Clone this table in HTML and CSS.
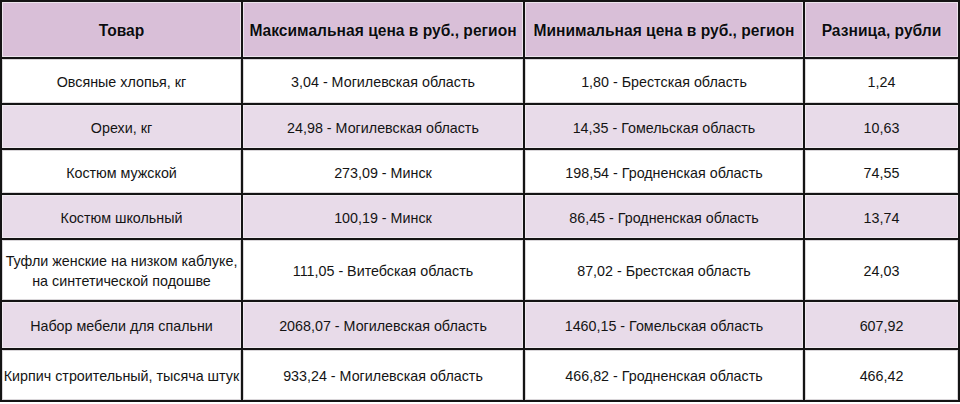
FILE: index.html
```html
<!DOCTYPE html>
<html lang="ru">
<head>
<meta charset="utf-8">
<title>Цены</title>
<link rel="stylesheet" href="styles.css">
</head>
<body>
<table class="prices">
  <colgroup>
    <col class="c1"><col class="c2"><col class="c3"><col class="c4">
  </colgroup>
  <tr class="head">
    <th>Товар</th>
    <th>Максимальная цена в руб., регион</th>
    <th>Минимальная цена в руб., регион</th>
    <th>Разница, рубли</th>
  </tr>
  <tr class="r1">
    <td>Овсяные хлопья, кг</td>
    <td>3,04 - Могилевская область</td>
    <td>1,80 - Брестская область</td>
    <td>1,24</td>
  </tr>
  <tr class="r alt">
    <td>Орехи, кг</td>
    <td>24,98 - Могилевская область</td>
    <td>14,35 - Гомельская область</td>
    <td>10,63</td>
  </tr>
  <tr class="r">
    <td>Костюм мужской</td>
    <td>273,09 - Минск</td>
    <td>198,54 - Гродненская область</td>
    <td>74,55</td>
  </tr>
  <tr class="r alt">
    <td>Костюм школьный</td>
    <td>100,19 - Минск</td>
    <td>86,45 - Гродненская область</td>
    <td>13,74</td>
  </tr>
  <tr class="r5">
    <td>Туфли женские на низком каблуке,<br>на синтетической подошве</td>
    <td>111,05 - Витебская область</td>
    <td>87,02 - Брестская область</td>
    <td>24,03</td>
  </tr>
  <tr class="r6 alt">
    <td>Набор мебели для спальни</td>
    <td>2068,07 - Могилевская область</td>
    <td>1460,15 - Гомельская область</td>
    <td>607,92</td>
  </tr>
  <tr class="r7">
    <td>Кирпич строительный, тысяча штук</td>
    <td>933,24 - Могилевская область</td>
    <td>466,82 - Гродненская область</td>
    <td>466,42</td>
  </tr>
</table>
</body>
</html>
```
FILE: styles.css
```css
html, body {
  margin: 0;
  padding: 0;
  background: #ffffff;
}

.prices {
  width: 960px;
  table-layout: fixed;
  border-collapse: separate;
  border-spacing: 2px;
  background: #141414;
  font-family: "Liberation Sans", Arial, sans-serif;
  font-size: 14.3px;
  color: #141414;
}

.c1 { width: 239px; }
.c2 { width: 280px; }
.c3 { width: 278px; }
.c4 { width: 153px; }

.prices th,
.prices td {
  box-sizing: border-box;
  padding: 2px 0 0;
  border: 1px solid #d9d6d9;
  text-align: center;
  vertical-align: middle;
  line-height: 20px;
  background: #ffffff;
  white-space: nowrap;
}

.prices th {
  font-weight: bold;
  font-size: 15.6px;
  background: #d9bfd8;
  border-color: #ece4ec;
  color: #0c0c10;
  text-shadow: 0 0 1px #f4eaf4;
}

.prices .alt td {
  background: #e8dbe9;
  border-color: #f0eaf0;
}

.head th { height: 55px; }
.r1 td { height: 44px; }
.r td { height: 43px; }
.r5 td { height: 60px; }
.r6 td { height: 46px; }
.r7 td { height: 50px; }
```
